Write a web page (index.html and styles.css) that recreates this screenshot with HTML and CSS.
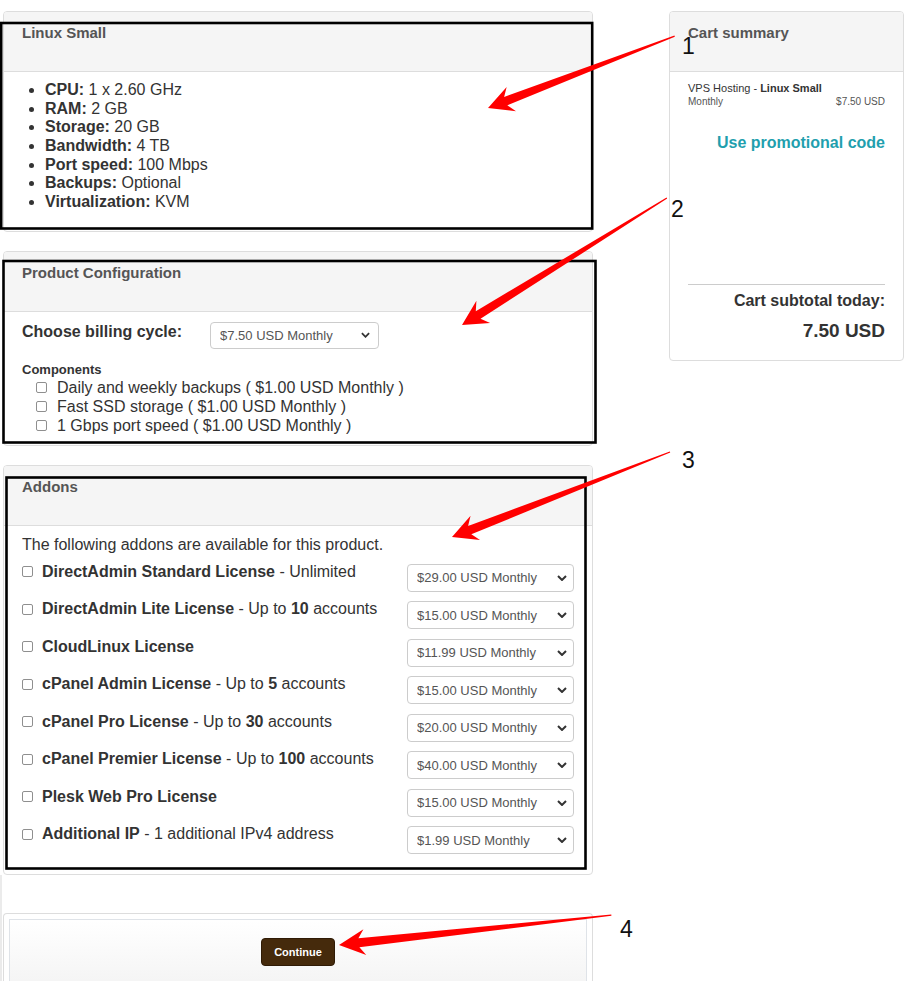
FILE: index.html
```html
<!DOCTYPE html>
<html lang="en">

<head>
  <meta charset="UTF-8">
  <meta name="viewport" content="width=device-width, initial-scale=1.0">
  <title>Configure VPS</title>
  <link rel="stylesheet" href="styles.css">
</head>

<body>
  <div class="page">
    <main class="main">
      <section class="panel">
        <div class="panel-heading">
          <h3>Linux Small</h3>
        </div>
        <div class="panel-body specs-body">
          <ul class="specs">
            <li><strong>CPU:</strong> 1 x 2.60 GHz</li>
            <li><strong>RAM:</strong> 2 GB</li>
            <li><strong>Storage:</strong> 20 GB</li>
            <li><strong>Bandwidth:</strong> 4 TB</li>
            <li><strong>Port speed:</strong> 100 Mbps</li>
            <li><strong>Backups:</strong> Optional</li>
            <li><strong>Virtualization:</strong> KVM</li>
          </ul>
        </div>
      </section>

      <section class="panel">
        <div class="panel-heading">
          <h3>Product Configuration</h3>
        </div>
        <div class="panel-body config-body">
          <div class="cycle">
            <label for="cycle">Choose billing cycle:</label>
            <span class="select cycle-select">
              <select id="cycle">
                <option>$7.50 USD Monthly</option>
              </select>
              <svg class="chev" viewBox="0 0 10 6"><path d="M1 1l4 4 4-4" /></svg>
            </span>
          </div>
          <h4>Components</h4>
          <label class="opt"><input type="checkbox"> Daily and weekly backups ( $1.00 USD Monthly )</label>
          <label class="opt"><input type="checkbox"> Fast SSD storage ( $1.00 USD Monthly )</label>
          <label class="opt"><input type="checkbox"> 1 Gbps port speed ( $1.00 USD Monthly )</label>
        </div>
      </section>

      <section class="panel addons">
        <div class="panel-heading">
          <h3>Addons</h3>
        </div>
        <div class="panel-body addons-body">
          <p class="intro">The following addons are available for this product.</p>
          <div class="addon-list">
            <label class="addon"><input type="checkbox"><span><strong>DirectAdmin Standard License</strong> - Unlimited</span></label>
            <span class="select"><select><option>$29.00 USD Monthly</option></select><svg class="chev" viewBox="0 0 10 6"><path d="M1 1l4 4 4-4" /></svg></span>

            <label class="addon"><input type="checkbox"><span><strong>DirectAdmin Lite License</strong> - Up to <strong>10</strong> accounts</span></label>
            <span class="select"><select><option>$15.00 USD Monthly</option></select><svg class="chev" viewBox="0 0 10 6"><path d="M1 1l4 4 4-4" /></svg></span>

            <label class="addon"><input type="checkbox"><span><strong>CloudLinux License</strong></span></label>
            <span class="select"><select><option>$11.99 USD Monthly</option></select><svg class="chev" viewBox="0 0 10 6"><path d="M1 1l4 4 4-4" /></svg></span>

            <label class="addon"><input type="checkbox"><span><strong>cPanel Admin License</strong> - Up to <strong>5</strong> accounts</span></label>
            <span class="select"><select><option>$15.00 USD Monthly</option></select><svg class="chev" viewBox="0 0 10 6"><path d="M1 1l4 4 4-4" /></svg></span>

            <label class="addon"><input type="checkbox"><span><strong>cPanel Pro License</strong> - Up to <strong>30</strong> accounts</span></label>
            <span class="select"><select><option>$20.00 USD Monthly</option></select><svg class="chev" viewBox="0 0 10 6"><path d="M1 1l4 4 4-4" /></svg></span>

            <label class="addon"><input type="checkbox"><span><strong>cPanel Premier License</strong> - Up to <strong>100</strong> accounts</span></label>
            <span class="select"><select><option>$40.00 USD Monthly</option></select><svg class="chev" viewBox="0 0 10 6"><path d="M1 1l4 4 4-4" /></svg></span>

            <label class="addon"><input type="checkbox"><span><strong>Plesk Web Pro License</strong></span></label>
            <span class="select"><select><option>$15.00 USD Monthly</option></select><svg class="chev" viewBox="0 0 10 6"><path d="M1 1l4 4 4-4" /></svg></span>

            <label class="addon"><input type="checkbox"><span><strong>Additional IP</strong> - 1 additional IPv4 address</span></label>
            <span class="select"><select><option>$1.99 USD Monthly</option></select><svg class="chev" viewBox="0 0 10 6"><path d="M1 1l4 4 4-4" /></svg></span>
          </div>
        </div>
      </section>

      <div class="checkout">
        <div class="panel actions">
          <div class="well">
            <button type="submit" class="btn-continue">Continue</button>
          </div>
        </div>
      </div>
    </main>

    <aside class="panel cart">
      <div class="panel-heading">
        <h3>Cart summary</h3>
      </div>
      <div class="cart-body">
        <div class="item-name">VPS Hosting - <strong>Linux Small</strong></div>
        <div class="item-meta">
          <span>Monthly</span>
          <span>$7.50 USD</span>
        </div>
        <a class="promo" href="#">Use promotional code</a>
        <hr>
        <div class="subtotal-label">Cart subtotal today:</div>
        <div class="subtotal">7.50 USD</div>
      </div>
    </aside>
  </div>

  <!-- annotation layer drawn over the screenshot -->
  <svg class="marks" width="905" height="981" viewBox="0 0 905 981">
    <g class="boxes">
      <rect x="1.2" y="23" width="591" height="205.5" />
      <rect x="3.5" y="261" width="592" height="181.5" />
      <rect x="6.5" y="477.5" width="579" height="391" />
    </g>
    <g class="arrows">
      <polygon transform="translate(488 108) rotate(-21.06)" points="0,0 25,-13 19,-4.5 200,-0.6 200,0.6 19,4.5 25,13" />
      <polygon transform="translate(462 325) rotate(-31.78)" points="0,0 25,-13 19,-4.5 241,-0.6 241,0.6 19,4.5 25,13" />
      <polygon transform="translate(452 537) rotate(-21.3)" points="0,0 25,-13 19,-4.5 234,-0.6 234,0.6 19,4.5 25,13" />
      <polygon transform="translate(339 945) rotate(-6.27)" points="0,0 26,-13 20,-4.5 274,-0.6 274,0.6 20,4.5 26,13" />
    </g>
    <g class="nums">
      <text x="682" y="54">1</text>
      <text x="671" y="217">2</text>
      <text x="682" y="468">3</text>
      <text x="620" y="937">4</text>
    </g>
  </svg>
</body>

</html>
```

FILE: styles.css
```css
html,
body {
  margin: 0;
  height: 981px;
  overflow: hidden;
}

body {
  position: relative;
  font-family: "Liberation Sans", Arial, sans-serif;
  color: #333;
  background: #fff;
}

.page {
  display: flex;
  align-items: flex-start;
  padding: 11px 0 0 3px;
}

.main {
  width: 590px;
}

/* panels */
.panel {
  border: 1px solid #ddd;
  border-radius: 4px;
  background: #fff;
  margin-bottom: 19px;
}

.panel-heading {
  height: 60px;
  box-sizing: border-box;
  padding: 11px 18px 0;
  background: #f5f5f5;
  border-bottom: 1px solid #ddd;
  border-radius: 3px 3px 0 0;
}

.panel-heading h3 {
  margin: 0;
  font-size: 15px;
  line-height: 20px;
  font-weight: bold;
  color: #555;
}

.specs-body {
  padding: 9px 15px 19px;
}

.specs {
  margin: 0;
  padding-left: 26px;
  font-size: 16px;
  line-height: 18.67px;
}

/* product configuration */
.config-body {
  padding: 9px 18px 10px;
}

.cycle {
  display: flex;
  align-items: flex-start;
}

.cycle label {
  width: 188px;
  padding-top: 2px;
  font-size: 16px;
  font-weight: bold;
  line-height: 18px;
}

.select {
  position: relative;
  display: block;
}

.select select {
  appearance: none;
  display: block;
  width: 100%;
  height: 28px;
  padding: 0 0 0 9px;
  border: 1px solid #ccc;
  border-radius: 4px;
  background: #fff;
  color: #555;
  font-family: inherit;
  font-size: 13px;
}

.select .chev {
  position: absolute;
  right: 7px;
  top: 50%;
  width: 10px;
  height: 6px;
  margin-top: -3px;
  fill: none;
  stroke: #333;
  stroke-width: 2;
  pointer-events: none;
}

.cycle-select {
  width: 169px;
  margin-top: 1px;
}

.cycle-select select {
  height: 27px;
}

.cycle-select .chev {
  right: 9px;
  width: 9px;
}

.config-body h4 {
  margin: 13px 0 0;
  font-size: 13px;
  line-height: 15px;
}

.opt {
  display: flex;
  align-items: center;
  padding-left: 14px;
  font-size: 16px;
  line-height: 19px;
}

.opt:first-of-type {
  margin-top: 1px;
}

input[type="checkbox"] {
  appearance: none;
  flex: none;
  width: 11px;
  height: 11px;
  margin: 0 9px 0 0;
  border: 1px solid #8f8f8f;
  border-radius: 2px;
  background: #fff;
}

.opt input[type="checkbox"] {
  margin-right: 10px;
}

/* addons */
.addons {
  margin-bottom: 0;
}

.addons-body {
  padding: 10px 18px 20px 18px;
}

.intro {
  margin: 0 0 9px;
  font-size: 16px;
  line-height: 18px;
}

.addon-list {
  display: grid;
  grid-template-columns: 1fr 167px;
  row-gap: 8.5px;
  align-items: start;
}

.addon {
  display: flex;
  align-items: center;
  font-size: 16px;
  line-height: 18.4px;
}

.addon-list .select {
  margin-top: 1px;
}

/* continue */
.checkout {
  margin-left: -3px;
  padding: 37.5px 0 0 1px;
  border-left: 2px solid #ebebeb;
}

.actions {
  height: 62px;
  padding: 5px 5px 0;
  margin-bottom: 0;
  border-bottom: 0;
  border-radius: 4px 4px 0 0;
}

.well {
  height: 100%;
  box-sizing: border-box;
  padding-top: 18px;
  text-align: center;
  border: 1px solid #dfe3e8;
  border-bottom: 0;
  background: linear-gradient(#fff, #f5f5f5 60px);
}

.btn-continue {
  height: 28px;
  padding: 0 12px;
  border: 1px solid #2f1b06;
  border-radius: 4px;
  background: #452a0c;
  color: #fff;
  font-family: inherit;
  font-size: 11px;
  font-weight: bold;
}

/* cart summary */
.cart {
  width: 235px;
  box-sizing: border-box;
  margin: 0 0 0 76px;
}

.cart-body {
  display: flex;
  flex-direction: column;
  padding: 9px 18px 18px;
}

.item-name {
  font-size: 11px;
  line-height: 14px;
}

.item-meta {
  display: flex;
  justify-content: space-between;
  margin-top: 1px;
  font-size: 10px;
  line-height: 12px;
  color: #555;
}

.promo {
  margin-top: 26px;
  text-align: right;
  font-size: 16px;
  font-weight: bold;
  line-height: 18px;
  color: #1f9fae;
  text-decoration: none;
}

.cart hr {
  width: 100%;
  margin: 132px 0 0;
  border: 0;
  border-top: 1px solid #ccc;
}

.subtotal-label {
  margin-top: 7px;
  text-align: right;
  font-size: 16px;
  font-weight: bold;
  line-height: 18px;
}

.subtotal {
  margin-top: 10px;
  text-align: right;
  font-size: 19px;
  font-weight: bold;
  line-height: 22px;
}

/* annotations */
.marks {
  position: absolute;
  top: 0;
  left: 0;
  pointer-events: none;
}

.boxes rect {
  fill: none;
  stroke: #000;
  stroke-width: 2.6;
}

.arrows polygon {
  fill: #f00;
}

.nums text {
  font-family: "Liberation Sans", Arial, sans-serif;
  font-size: 23px;
  fill: #111;
}
```
